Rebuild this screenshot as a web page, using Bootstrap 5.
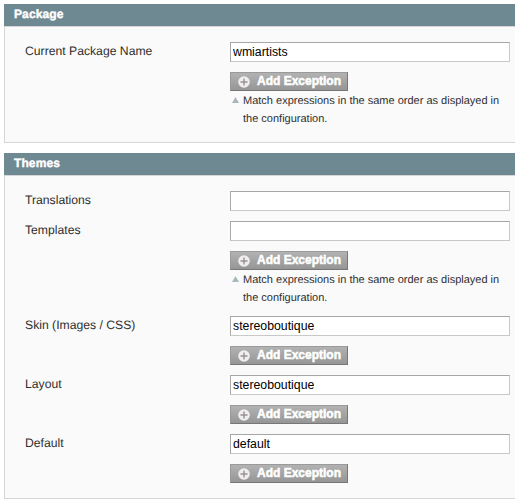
<!DOCTYPE html>
<html lang="en">
<head>
<meta charset="utf-8">
<meta name="viewport" content="width=device-width, initial-scale=1">
<title>Design configuration</title>
<link href="https://cdn.jsdelivr.net/npm/bootstrap@5.3.0/dist/css/bootstrap.min.css" rel="stylesheet">
<style>
body{font:12px/18px "Liberation Sans",Arial,sans-serif;color:#2f2f2f;background:#fff;overflow:hidden;text-rendering:geometricPrecision}
.config{padding:4px 0 0 4px;gap:10px}
.section-head{height:22px;line-height:21px;padding-left:10px;background:#6f8992;color:#fff;font-size:12px;font-weight:700;letter-spacing:.1px;-webkit-text-stroke:.4px #fff}
.section-body{gap:10px;background:#fafafa;border:1px solid #d6d6d6;border-right:0;padding:15px 5px 15px 20px}
.field-label{width:205px;flex:none;line-height:18px;font-size:12.2px}
.field-input{height:20px;min-height:0;padding:0 2px;border:1px solid #c8c8c8;border-top-color:#a6a6a6;border-left-color:#aaa;border-radius:0;font-size:12.3px;line-height:18px;color:#000;background:#fff}
.field-input:focus{box-shadow:none}
.btn-exception{width:118px;height:19px;margin-top:10px;padding:0 0 0 7px;border:1px solid;border-color:#9a9a9a #777 #777 #9a9a9a;border-radius:0;background:linear-gradient(#b2b2b2,#969696);color:#fff;font-size:12px;font-weight:700;line-height:16px;-webkit-text-stroke:.5px #fff}
.btn-exception svg{margin-right:7px;flex:none}
.btn-exception span{padding-bottom:2px}
.note{height:36px;font-size:11px;line-height:18px;padding:1px 0 0 1px}
.note svg{flex:none;margin:5px 4px 0 1px}
</style>
</head>
<body>
<svg class="d-none"><symbol id="plus" viewBox="0 0 12 12"><circle cx="6" cy="6" r="5.8" fill="#f0eeee"/><path d="M6 2.5v7M2.5 6h7" stroke="#989191" stroke-width="1.4"/></symbol>
<symbol id="tri" viewBox="0 0 7 6"><path d="M3.5 0 7 6H0z" fill="#a9b8bd"/></symbol></svg>
<main class="config d-flex flex-column">
<section>
<h2 class="section-head m-0">Package</h2>
<div class="section-body">
<div class="d-flex"><label class="field-label" for="f1">Current Package Name</label>
<div class="flex-grow-1"><input id="f1" class="form-control field-input" value="wmiartists">
<button class="btn btn-exception d-flex align-items-center"><svg width="12" height="12"><use href="#plus"/></svg><span>Add Exception</span></button>
<div class="note d-flex"><svg width="7" height="6"><use href="#tri"/></svg><span>Match expressions in the same order as displayed in<br>the configuration.</span></div></div></div>
</div>
</section>
<section>
<h2 class="section-head m-0">Themes</h2>
<div class="section-body d-flex flex-column">
<div class="d-flex"><label class="field-label" for="f2">Translations</label>
<div class="flex-grow-1"><input id="f2" class="form-control field-input"></div></div>
<div class="d-flex"><label class="field-label" for="f3">Templates</label>
<div class="flex-grow-1"><input id="f3" class="form-control field-input">
<button class="btn btn-exception d-flex align-items-center"><svg width="12" height="12"><use href="#plus"/></svg><span>Add Exception</span></button>
<div class="note d-flex"><svg width="7" height="6"><use href="#tri"/></svg><span>Match expressions in the same order as displayed in<br>the configuration.</span></div></div></div>
<div class="d-flex"><label class="field-label" for="f4">Skin (Images / CSS)</label>
<div class="flex-grow-1"><input id="f4" class="form-control field-input" value="stereoboutique">
<button class="btn btn-exception d-flex align-items-center"><svg width="12" height="12"><use href="#plus"/></svg><span>Add Exception</span></button></div></div>
<div class="d-flex"><label class="field-label" for="f5">Layout</label>
<div class="flex-grow-1"><input id="f5" class="form-control field-input" value="stereoboutique">
<button class="btn btn-exception d-flex align-items-center"><svg width="12" height="12"><use href="#plus"/></svg><span>Add Exception</span></button></div></div>
<div class="d-flex"><label class="field-label" for="f6">Default</label>
<div class="flex-grow-1"><input id="f6" class="form-control field-input" value="default">
<button class="btn btn-exception d-flex align-items-center"><svg width="12" height="12"><use href="#plus"/></svg><span>Add Exception</span></button></div></div>
</div>
</section>
</main>
<script src="https://cdn.jsdelivr.net/npm/bootstrap@5.3.0/dist/js/bootstrap.bundle.min.js"></script>
</body>
</html>
